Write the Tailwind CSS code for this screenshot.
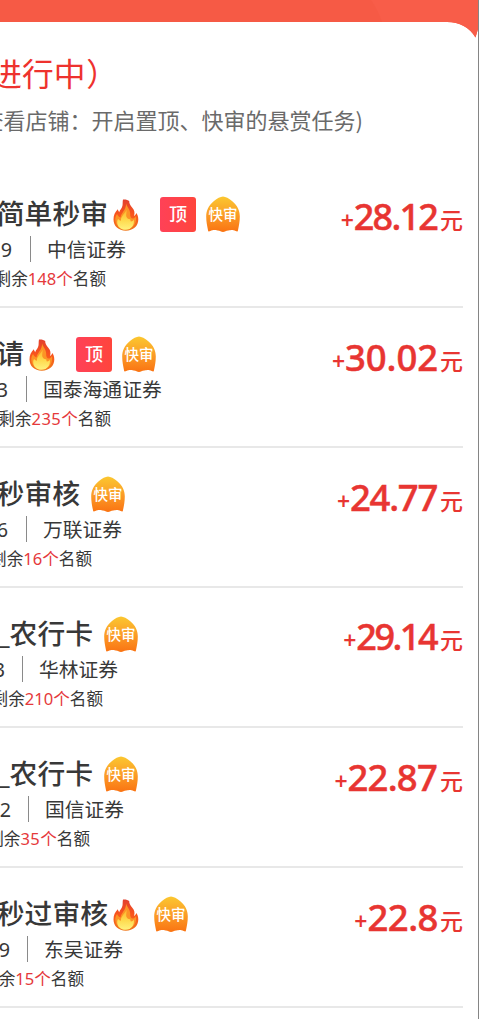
<!DOCTYPE html>
<html lang="zh-CN">
<head>
<meta charset="utf-8">
<title>悬赏任务</title>
<script src="https://cdn.jsdelivr.net/npm/@tailwindcss/browser@4"></script>
</head>
<body class="bg-white">
<svg class="absolute size-0" aria-hidden="true">
  <defs>
    <linearGradient id="g-fast" x1="0" y1="0" x2="0" y2="1"><stop offset="0" stop-color="#fbc72f"/><stop offset=".5" stop-color="#fb9e28"/><stop offset="1" stop-color="#fa7312"/></linearGradient>
    <linearGradient id="g-fire" x1="0" y1="0" x2="0" y2="1"><stop offset="0" stop-color="#e2402f"/><stop offset=".5" stop-color="#f9551c"/><stop offset="1" stop-color="#ef7a1c"/></linearGradient>
    <linearGradient id="g-core" x1="0" y1="0" x2="0" y2="1"><stop offset="0" stop-color="#fdb62c"/><stop offset=".5" stop-color="#fed84b"/><stop offset="1" stop-color="#fff27e"/></linearGradient>
    <symbol id="fast" viewBox="0 0 34 36">
      <path fill="url(#g-fast)" d="M17 .5C19.500 .6 23 2.500 26 5C31.500 9.500 33.800 14.500 33.800 20.500C33.800 26 32.800 30 31.800 35.300C30.500 35.800 29.500 34.500 27.500 34.200C25 33.900 24 34.500 22.500 34.500C20 34.400 19 36 17 36C15 36 14 34.400 11.500 34.500C10 34.500 9 33.900 6.500 34.200C4.500 34.500 3.500 35.800 2.200 35.300C1.200 30 .2 26 .2 20.500C.2 14.500 2.500 9.500 8 5C11 2.500 14.500 .6 17 .5Z"/>
      <text x="17" y="24.300" text-anchor="middle" font-size="14.500" font-weight="500" fill="#fff" font-family="'Noto Sans CJK SC',sans-serif">快审</text>
    </symbol>
    <symbol id="fire" viewBox="0 0 26 32">
      <path fill="url(#g-fire)" d="M10 .5C9.200 4 10.500 6.500 8 10C7.200 11.200 6.500 12 6.300 13.200C5.500 12.300 5 11.300 4.800 10.300C2 13 .5 16.500 .5 20.500C.5 27 5.500 31.700 12.800 31.700C20.300 31.700 25.300 27 25.300 20.500C25.300 17.500 24.500 15.500 23.300 14C22.800 15.500 22 16.500 21 17C22 13.500 21.500 11.500 19.500 9C17 6 16.200 4.500 16.200 2C15 1 12.500 .2 10 .5Z"/>
      <path fill="#fc9426" d="M13 4.500C14 8 17.500 11 17.200 15C17 17.500 18 19.500 20 19.500C21.500 19.300 22.500 18 23 17C24 23 21 29.800 13 30.300C6 30.300 2 25.500 2.300 19.500C2.600 17.500 3.300 15.800 4.100 15C4.800 17 6 18 7.500 18.500C8 14 13.500 10.500 13 4.500Z"/>
      <path fill="url(#g-core)" d="M13.500 10.500C14 13 12.700 15.500 13.300 17.500C13.800 19 15.500 20.500 17.200 20.200C17.500 21.500 17.500 22 18 22.500C19.500 22.500 20.200 21.500 20.700 20.500C21.900 25.500 18.500 30.800 12.700 30.800C7.300 30.800 4.200 27.500 4.200 23C4.200 21.500 4.600 20.500 5.200 20C6 21 7 21.700 8 21.700C7.500 17 12.500 14.500 13.500 10.500Z"/>
    </symbol>
  </defs>
</svg>
<main class="relative h-[1019px] w-[479px] overflow-hidden whitespace-nowrap bg-white font-['Noto_Sans','Noto_Sans_CJK_SC',sans-serif] text-[#383838]">
  <svg class="block" width="479" height="40" viewBox="0 0 479 40">
    <path fill="#f65a45" d="M0 0H478V29L475.500 37.500Q466 22 447 22H0Z"/>
    <path fill="#f85d49" d="M371 0H478V29L475.500 37.500Q466 22 447 22H382Q378 10 371 0Z"/>
  </svg>
  <header class="h-[128px] font-['Noto_Sans_CJK_SC',sans-serif]">
    <div class="flex h-[66px] w-[118px] items-center justify-end text-[31.700px] leading-none text-[#ee322e]">进行中<span class="pl-px">）</span></div>
    <div class="flex h-[26px] w-[363px] items-center justify-end text-[22px] leading-none text-[#6a6a6a]">查看店铺：开启置顶、快审的悬赏任务)</div>
  </header>

  <section class="mr-4 flex h-[140px] border-b-2 border-[#e8e8e8] pt-7">
    <div class="min-w-0 flex-1">
      <div class="flex h-9 items-center"><div class="flex w-[108px] justify-end text-[27.800px] font-medium leading-none">简单秒审</div><svg class="mt-px ml-[5px] h-8 w-[26px]"><use href="#fire"/></svg><div class="ml-[21px] flex h-[35px] w-9 items-center justify-center rounded-[3px] bg-linear-to-r from-[#ff4157] to-[#ff453b] text-lg font-medium leading-none text-white">顶</div><svg class="ml-[10px] h-9 w-[34px]"><use href="#fast"/></svg></div>
      <div class="mt-1 flex h-[26px] items-center text-[19.800px] leading-none"><div class="flex w-3 justify-end pt-0.5">9</div><i class="ml-[18px] h-[26px] w-px bg-[#8a8a8a]"></i><span class="ml-4 pt-0.5">中信证券</span></div>
      <div class="mt-[7px] flex h-[21px] w-[106px] items-center justify-end text-[16.600px] leading-none">剩余<span class="text-[#e5393b]">148个</span>名额</div>
    </div>
    <div class="flex h-[42px] items-baseline text-[#e83532]"><span class="relative -top-px text-[23px] font-semibold leading-none">+</span><span class="text-[36px] font-medium leading-[42px] tracking-[-1.800px] [-webkit-text-stroke:.5px]">28.12</span><span class="relative -top-px ml-[3px] text-[23px] font-medium leading-none">元</span></div>
  </section>

  <section class="mr-4 flex h-[140px] border-b-2 border-[#e8e8e8] pt-7">
    <div class="min-w-0 flex-1">
      <div class="flex h-9 items-center"><div class="flex w-6 justify-end text-[27.800px] font-medium leading-none">请</div><svg class="mt-px ml-[5px] h-8 w-[26px]"><use href="#fire"/></svg><div class="ml-[21px] flex h-[35px] w-9 items-center justify-center rounded-[3px] bg-linear-to-r from-[#ff4157] to-[#ff453b] text-lg font-medium leading-none text-white">顶</div><svg class="ml-[10px] h-9 w-[34px]"><use href="#fast"/></svg></div>
      <div class="mt-1 flex h-[26px] items-center text-[19.800px] leading-none"><div class="flex w-[8px] justify-end pt-0.5">3</div><i class="ml-[18px] h-[26px] w-px bg-[#8a8a8a]"></i><span class="ml-4 pt-0.5">国泰海通证券</span></div>
      <div class="mt-[7px] flex h-[21px] w-[111px] items-center justify-end text-[16.600px] leading-none">剩余<span class="text-[#e5393b]"><span class="tracking-[.4px]">235</span>个</span>名额</div>
    </div>
    <div class="flex h-[42px] items-baseline text-[#e83532]"><span class="relative -top-px text-[23px] font-semibold leading-none">+</span><span class="text-[36.500px] font-medium leading-[42px] tracking-[-.1px] [-webkit-text-stroke:.5px]">30.02</span><span class="relative -top-px ml-0.5 text-[23px] font-medium leading-none">元</span></div>
  </section>

  <section class="mr-4 flex h-[140px] border-b-2 border-[#e8e8e8] pt-7">
    <div class="min-w-0 flex-1">
      <div class="flex h-9 items-center"><div class="flex w-20 justify-end text-[27.800px] font-medium leading-none">秒审核</div><svg class="ml-[11px] h-9 w-[34px]"><use href="#fast"/></svg></div>
      <div class="mt-1 flex h-[26px] items-center text-[19.800px] leading-none"><div class="flex w-[8px] justify-end pt-0.5">6</div><i class="ml-[18px] h-[26px] w-px bg-[#8a8a8a]"></i><span class="ml-4 pt-0.5">万联证券</span></div>
      <div class="mt-[7px] flex h-[21px] w-[92px] items-center justify-end text-[16.600px] leading-none">剩余<span class="text-[#e5393b]">16个</span>名额</div>
    </div>
    <div class="flex h-[42px] items-baseline text-[#e83532]"><span class="relative -top-px text-[23px] font-semibold leading-none">+</span><span class="text-[36.500px] font-medium leading-[42px] tracking-[-1.300px] [-webkit-text-stroke:.5px]">24.77</span><span class="relative -top-px ml-[3px] text-[23px] font-medium leading-none">元</span></div>
  </section>

  <section class="mr-4 flex h-[140px] border-b-2 border-[#e8e8e8] pt-7">
    <div class="min-w-0 flex-1">
      <div class="flex h-9 items-center"><div class="flex w-[93px] justify-end text-[27.800px] font-medium leading-none">_农行卡</div><svg class="ml-[11px] h-9 w-[34px]"><use href="#fast"/></svg></div>
      <div class="mt-1 flex h-[26px] items-center text-[19.800px] leading-none"><div class="flex w-[5px] justify-end pt-0.5">3</div><i class="ml-[17px] h-[26px] w-px bg-[#8a8a8a]"></i><span class="ml-4 pt-0.5">华林证券</span></div>
      <div class="mt-[7px] flex h-[21px] w-[103px] items-center justify-end text-[16.600px] leading-none">剩余<span class="text-[#e5393b]">210个</span>名额</div>
    </div>
    <div class="flex h-[42px] items-baseline text-[#e83532]"><span class="relative -top-px text-[23px] font-semibold leading-none">+</span><span class="text-[36px] font-medium leading-[42px] tracking-[-2.500px] [-webkit-text-stroke:.5px]">29.14</span><span class="relative -top-px ml-[4px] text-[23px] font-medium leading-none">元</span></div>
  </section>

  <section class="mr-4 flex h-[140px] border-b-2 border-[#e8e8e8] pt-7">
    <div class="min-w-0 flex-1">
      <div class="flex h-9 items-center"><div class="flex w-[93px] justify-end text-[27.800px] font-medium leading-none">_农行卡</div><svg class="ml-[11px] h-9 w-[34px]"><use href="#fast"/></svg></div>
      <div class="mt-1 flex h-[26px] items-center text-[19.800px] leading-none"><div class="flex w-[11px] justify-end pt-0.5">2</div><i class="ml-[17px] h-[26px] w-px bg-[#8a8a8a]"></i><span class="ml-4 pt-0.5">国信证券</span></div>
      <div class="mt-[7px] flex h-[21px] w-[90px] items-center justify-end text-[16.600px] leading-none">剩余<span class="text-[#e5393b]"><span class="tracking-[.4px]">35</span>个</span>名额</div>
    </div>
    <div class="flex h-[42px] items-baseline text-[#e83532]"><span class="relative -top-px text-[23px] font-semibold leading-none">+</span><span class="text-[36.500px] font-medium leading-[42px] tracking-[-.8px] [-webkit-text-stroke:.5px]">22.87</span><span class="relative -top-px ml-[3px] text-[23px] font-medium leading-none">元</span></div>
  </section>

  <section class="mr-4 flex h-[140px] border-b-2 border-[#e8e8e8] pt-7">
    <div class="min-w-0 flex-1">
      <div class="flex h-9 items-center"><div class="flex w-[108px] justify-end text-[27.800px] font-medium leading-none">秒过审核</div><svg class="mt-px ml-[5px] h-8 w-[26px]"><use href="#fire"/></svg><svg class="ml-[15px] h-9 w-[34px]"><use href="#fast"/></svg></div>
      <div class="mt-1 flex h-[26px] items-center text-[19.800px] leading-none"><div class="flex w-[10px] justify-end pt-0.5">9</div><i class="ml-[17px] h-[26px] w-px bg-[#8a8a8a]"></i><span class="ml-4 pt-0.5">东吴证券</span></div>
      <div class="mt-[7px] flex h-[21px] w-[84px] items-center justify-end text-[16.600px] leading-none">剩余<span class="text-[#e5393b]">15个</span>名额</div>
    </div>
    <div class="flex h-[42px] items-baseline text-[#e83532]"><span class="relative -top-px text-[23px] font-semibold leading-none">+</span><span class="text-[36.500px] font-medium leading-[42px] tracking-[-.5px] [-webkit-text-stroke:.5px]">22.8</span><span class="relative -top-px ml-0.5 text-[23px] font-medium leading-none">元</span></div>
  </section>
  <div class="absolute top-0 right-0 h-full w-px bg-[#858585]"></div>
</main>
</body>
</html>
